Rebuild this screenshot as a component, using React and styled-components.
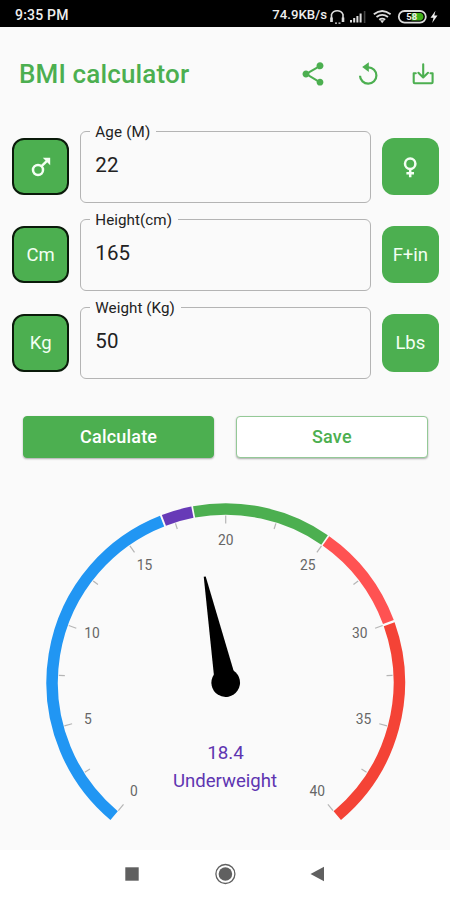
import React from "react";
import styled, { createGlobalStyle } from "styled-components";
import { MdShare } from "react-icons/md";

const GREEN = "#4caf50";

const GlobalStyle = createGlobalStyle`
  *, *::before, *::after { box-sizing: border-box; }
  body { margin: 0; background: #fafafa; font-family: Roboto, sans-serif; }
`;

const Screen = styled.div`
  width: 450px;
  height: 900px;
  display: flex;
  flex-direction: column;
  overflow: hidden;
  background: #fafafa;
`;

const StatusBar = styled.div`
  flex: none;
  height: 27px;
  padding: 2px 11px 0 15px;
  display: flex;
  align-items: center;
  justify-content: space-between;
  background: #000;
  color: #eee;
  font-weight: 500;
`;

const Clock = styled.span`
  font-size: 14px;
  letter-spacing: 0.2px;
`;

const StatusIcons = styled.div`
  display: flex;
  align-items: center;
  gap: 2px;
  font-size: 13.2px;
`;

const Header = styled.header`
  flex: none;
  height: 94px;
  padding: 0 13px 0 19px;
  display: flex;
  align-items: center;
  justify-content: space-between;
`;

const Title = styled.h1`
  margin: 0;
  font-size: 26px;
  line-height: 30px;
  font-weight: 500;
  letter-spacing: 0.15px;
  color: ${GREEN};
`;

const Actions = styled.div`
  display: flex;
  gap: 27px;
  color: ${GREEN};
`;

const IconButton = styled.button`
  width: 28px;
  height: 28px;
  padding: 0;
  border: 0;
  background: none;
  color: inherit;
  svg { display: block; }
`;

const Form = styled.div`
  flex: none;
  padding: 10px 11px 0 12px;
  display: flex;
  flex-direction: column;
  gap: 17px;
`;

const Row = styled.div`
  height: 71.2px;
  display: flex;
  align-items: center;
  gap: 11px;
`;

const UnitButton = styled.button`
  flex: none;
  width: 57.3px;
  height: 57.3px;
  padding: 0;
  display: flex;
  align-items: center;
  justify-content: center;
  border: ${(p) => (p.$selected ? "2px solid #0a1a0a" : "0")};
  border-radius: 12px;
  background: ${GREEN};
  color: #f3fff3;
  font: 400 18.5px Roboto, sans-serif;
`;

const Field = styled.fieldset`
  flex: 1;
  min-width: 0;
  height: 80px;
  margin: -8px 0 0;
  padding: 0 0 0 14px;
  border: 1px solid #b4b4b4;
  border-radius: 6px;
  color: #222;
`;

const Legend = styled.legend`
  margin-left: -5px;
  padding: 0 6px 0 5px;
  height: 17px;
  font-size: 15.2px;
  line-height: 18px;
  letter-spacing: ${(p) => p.$tracking}px;
`;

const Value = styled.div`
  padding-top: 12.5px;
  font-size: 20.5px;
  line-height: 26px;
  letter-spacing: 0.1px;
`;

const Buttons = styled.div`
  flex: none;
  padding: 37px 22.5px 0 23px;
  display: flex;
  gap: 22px;
`;

const ActionButton = styled.button`
  flex: 1;
  height: 42px;
  padding: 0;
  border: 1px solid ${(p) => (p.$outlined ? "#94c997" : GREEN)};
  border-radius: 4px;
  background: ${(p) => (p.$outlined ? "#fff" : GREEN)};
  color: ${(p) => (p.$outlined ? GREEN : "#fff")};
  box-shadow: 0 1px 2px rgba(0, 0, 0, 0.32);
  font: 500 18px Roboto, sans-serif;
  letter-spacing: 0.2px;
`;

const GaugeArea = styled.main`
  flex: 1;
  min-height: 0;
  padding-top: 33.5px;
`;

const GaugeSvg = styled.svg`
  display: block;
  font-family: Roboto, sans-serif;
  text-anchor: middle;
`;

const NavBar = styled.nav`
  flex: none;
  height: 50px;
  padding: 0 124px 2px;
  display: flex;
  align-items: center;
  justify-content: space-between;
  background: #fff;
`;

const CX = 225.7;
const CY = 191.6;
const DEG_PER_UNIT = 7;

const polar = (value, radius) => {
  const a = ((value - 20) * DEG_PER_UNIT * Math.PI) / 180;
  return [CX + radius * Math.sin(a), CY - radius * Math.cos(a)];
};

const arc = (from, to, radius) => {
  const [x1, y1] = polar(from, radius);
  const [x2, y2] = polar(to, radius);
  const large = (to - from) * DEG_PER_UNIT > 180 ? 1 : 0;
  return `M${x1} ${y1}A${radius} ${radius} 0 ${large} 1 ${x2} ${y2}`;
};

const ranges = [
  { from: 0, to: 16.93, color: "#2196f3" },
  { from: 17.02, to: 18.42, color: "#673ab7" },
  { from: 18.5, to: 24.96, color: GREEN },
  { from: 25.04, to: 29.94, color: "#ff5252" },
  { from: 30.05, to: 40, color: "#f44336" },
];

const labels = [
  [0, 134, 791.5],
  [5, 88, 719.3],
  [10, 92, 633.3],
  [15, 144.5, 565.6],
  [20, 225.7, 540],
  [25, 307.7, 565.6],
  [30, 359.7, 633.3],
  [35, 363.5, 719.3],
  [40, 317.3, 791.5],
];

const ticks = Array.from({ length: 17 }, (_, i) => i * 2.5);

function Gauge({ value, status }) {
  return (
    <GaugeSvg width="450" height="358" viewBox="0 0 450 358">
      {ticks.map((t) => {
        const [x1, y1] = polar(t, 167);
        const [x2, y2] = polar(t, t % 5 ? 161 : 159);
        return <line key={t} x1={x1} y1={y1} x2={x2} y2={y2} stroke="#b5b5b5" strokeWidth="1.2" />;
      })}
      {ranges.map((r) => (
        <path key={r.from} d={arc(r.from, r.to, 173.6)} fill="none" stroke={r.color} strokeWidth="11.5" />
      ))}
      {labels.map(([n, x, y]) => (
        <text key={n} x={x} y={y - 491 + 4.8} fontSize="13.8" fill="#666">{n}</text>
      ))}
      <g transform={`translate(${CX} ${CY}) rotate(${(value - 20) * DEG_PER_UNIT})`}>
        <path d="M-11 0L-1 -108H1L11 0Z" />
        <circle r="14.3" />
      </g>
      <text x="225.5" y="268.3" fontSize="18.8" fill="#5e35b1">{value}</text>
      <text x="225" y="295.8" fontSize="18.6" fill="#5e35b1">{status}</text>
    </GaugeSvg>
  );
}

const ReplayIcon = () => (
  <svg width="28" height="28" viewBox="0 0 28 28" fill="none">
    <path d="M6 15.7A8.2 8.2 0 1 0 14.3 7.3H13" stroke="currentColor" strokeWidth="2.2" />
    <path d="M14.8 2.2V12L8.2 7.1Z" fill="currentColor" />
  </svg>
);

const DownloadIcon = () => (
  <svg width="28" height="28" viewBox="0 0 28 28" fill="none" stroke="currentColor" strokeWidth="2.1" strokeLinecap="round" strokeLinejoin="round">
    <path d="M6.8 13.3H4.7V22.3Q4.7 23.3 5.7 23.3H22.6Q23.6 23.3 23.6 22.3V13.3H21.5" />
    <path d="M14.2 4.3V17.3M9.4 12.8L14.2 17.5L19 12.8" />
  </svg>
);

const MaleIcon = () => (
  <svg width="24" height="24" viewBox="0 0 24 24" fill="none" stroke="currentColor" strokeWidth="2.5">
    <circle cx="9" cy="15" r="5" />
    <path d="M12.6 11.2L18.5 5.3" />
    <path d="M13.8 2.8H21.2V10.2Z" fill="currentColor" stroke="none" />
  </svg>
);

const FemaleIcon = () => (
  <svg width="24" height="24" viewBox="0 0 24 24" fill="none" stroke="currentColor" strokeWidth="2.5">
    <circle cx="12.2" cy="8.7" r="5.2" />
    <path d="M12.2 13.6V22.3M8.4 18.2H16" />
  </svg>
);

const SystemIcons = () => (
  <svg width="110" height="20" viewBox="0 0 110 20" fill="none" stroke="#ddd">
    <path d="M2.5 16.5V9.5A6.3 6.3 0 0 1 14 9.5V16.5" strokeWidth="1.6" />
    <path d="M2.5 12.5V17M14 12.5V17" strokeWidth="2.6" />
    <path d="M6 18.2H8M9.5 18.2H11.5" strokeWidth="1.3" />
    <path d="M22 17.5V15M25.2 17.5V13M28.4 17.5V11M31.6 17.5V8.5" strokeWidth="2" />
    <path d="M35.6 18V6" stroke="#444" strokeWidth="1.6" />
    <path d="M44.8 9.3Q53.2 2.7 61.6 9.3M47.5 12Q53.2 7.7 59 12M50.2 14.7Q53.2 12.6 56.2 14.7" strokeWidth="1.8" />
    <path d="M51 15.3L53.2 18.2L55.4 15.3Z" fill="#ddd" stroke="none" />
    <rect x="69.8" y="6" width="27" height="11.6" rx="5.8" strokeWidth="1.8" />
    <path d="M82.5 8H92Q94.5 9 94.5 11.8T92 15.6H82.5Z" fill="#3fae17" stroke="none" />
    <text x="82.8" y="15.2" fontSize="9.5" fontWeight="700" fill="#eee" stroke="none" textAnchor="middle">58</text>
    <path d="M106.5 5.8L101.5 12.7H104.5L103.2 18L108.5 10.6H105.3Z" fill="#eee" stroke="none" />
  </svg>
);

const rows = [
  { label: "Age (M)", tracking: 0.15, value: "22", left: <MaleIcon />, right: <FemaleIcon /> },
  { label: "Height(cm)", tracking: 0.05, value: "165", left: "Cm", right: "F+in" },
  { label: "Weight (Kg)", tracking: 0.05, value: "50", left: "Kg", right: "Lbs" },
];

export default function App() {
  return (
    <Screen>
      <GlobalStyle />
      <StatusBar>
        <Clock>9:35 PM</Clock>
        <StatusIcons>
          74.9KB/s
          <SystemIcons />
        </StatusIcons>
      </StatusBar>
      <Header>
        <Title>BMI calculator</Title>
        <Actions>
          <IconButton aria-label="Share"><MdShare size={28} /></IconButton>
          <IconButton aria-label="Reset"><ReplayIcon /></IconButton>
          <IconButton aria-label="Download"><DownloadIcon /></IconButton>
        </Actions>
      </Header>
      <Form>
        {rows.map((row) => (
          <Row key={row.label}>
            <UnitButton $selected>{row.left}</UnitButton>
            <Field>
              <Legend $tracking={row.tracking}>{row.label}</Legend>
              <Value>{row.value}</Value>
            </Field>
            <UnitButton>{row.right}</UnitButton>
          </Row>
        ))}
      </Form>
      <Buttons>
        <ActionButton>Calculate</ActionButton>
        <ActionButton $outlined>Save</ActionButton>
      </Buttons>
      <GaugeArea>
        <Gauge value={18.4} status="Underweight" />
      </GaugeArea>
      <NavBar>
        <svg width="16" height="22" viewBox="0 0 16 22">
          <rect x="1.3" y="4.3" width="13.4" height="13.4" fill="#606060" />
        </svg>
        <svg width="22" height="22" viewBox="0 0 22 22">
          <circle cx="11.4" cy="11" r="9.5" fill="none" stroke="#606060" strokeWidth="1.3" />
          <circle cx="11.4" cy="11" r="6.8" fill="#606060" />
        </svg>
        <svg width="16" height="22" viewBox="0 0 16 22">
          <path d="M14 3.8V18.2L0.5 11Z" fill="#606060" />
        </svg>
      </NavBar>
    </Screen>
  );
}
